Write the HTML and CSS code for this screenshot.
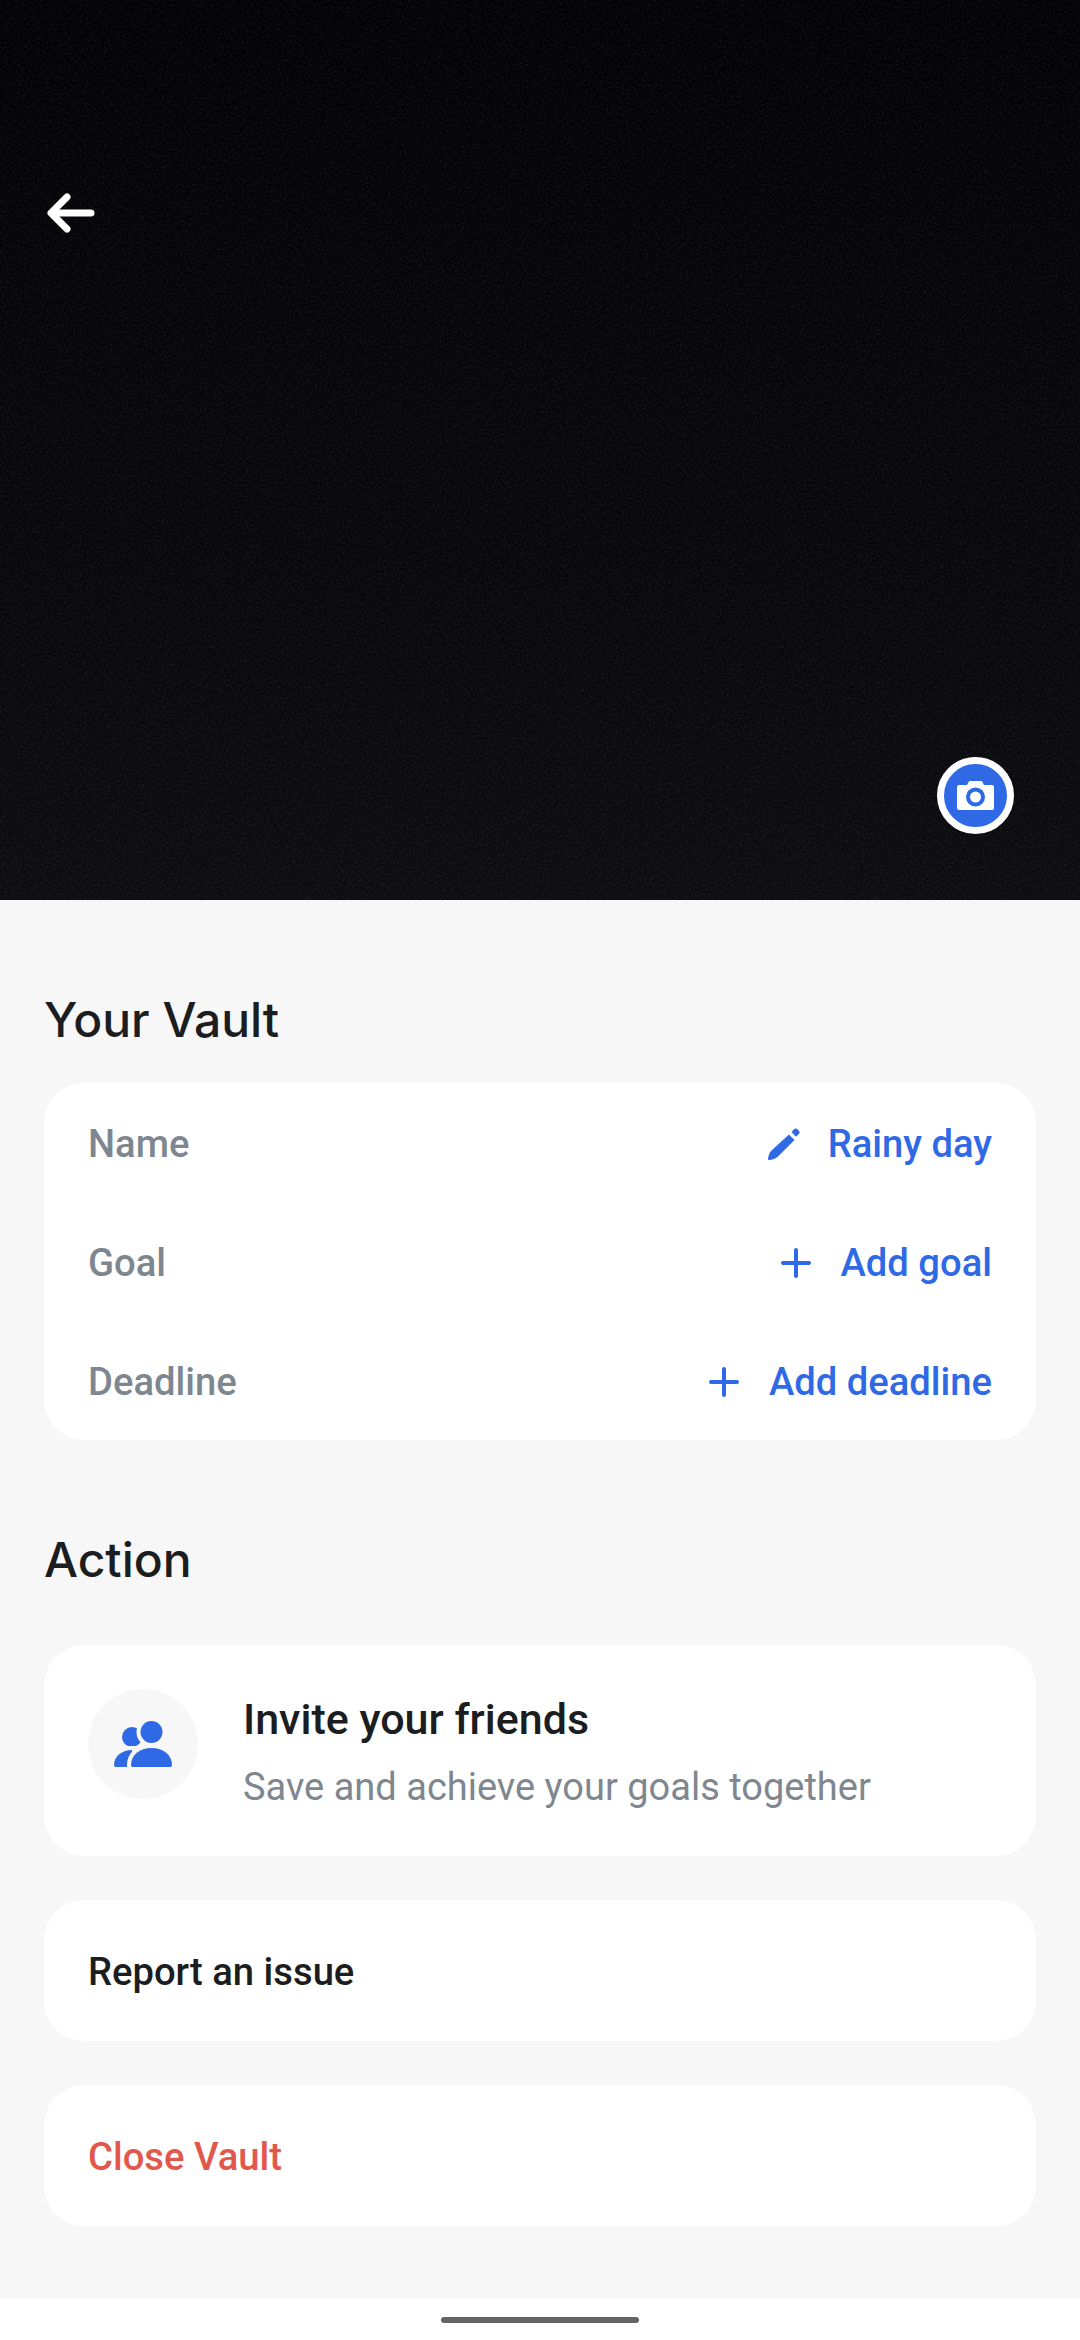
FILE: index.html
```html
<!DOCTYPE html>
<html lang="en">
<head>
  <meta charset="UTF-8" />
  <meta name="viewport" content="width=device-width, initial-scale=1.0"/>
  <title>Your Vault</title>
  <link rel="stylesheet" href="styles.css">
</head>
<body>

  <header class="hero">
    <svg class="grain" width="1080" height="900" aria-hidden="true">
      <filter id="grain">
        <feTurbulence type="fractalNoise" baseFrequency="0.45" numOctaves="2" seed="7"/>
        <feColorMatrix values="0 0 0 0 1  0 0 0 0 1  0 0 0 0 1  0.14 0 0 0 -0.055"/>
      </filter>
      <rect width="1080" height="900" filter="url(#grain)"/>
    </svg>
    <button class="back" aria-label="Back">
      <svg width="50" height="42" viewBox="0 0 50 42" fill="none" stroke="#fff" stroke-width="7" stroke-linecap="round" stroke-linejoin="round">
        <path d="M45 21H6M21 5L5 21l16 16"/>
      </svg>
    </button>
    <button class="camera" aria-label="Change picture">
      <svg width="37" height="29" viewBox="0 0 37 29">
        <path fill="#fff" d="M2 4h8l1.500-3c.3-.7.8-1 1.500-1h11c.7 0 1.200.3 1.500 1L27 4h8a2 2 0 0 1 2 2v21a2 2 0 0 1-2 2H2a2 2 0 0 1-2-2V6a2 2 0 0 1 2-2z"/>
        <circle cx="18.500" cy="16" r="9.500" fill="#2f69e5"/>
        <circle cx="18.500" cy="16" r="5.500" fill="#fff"/>
      </svg>
    </button>
  </header>

  <main>
    <h2 class="vault-title">Your Vault</h2>
    <section class="card details">
      <div class="row">
        <span class="label">Name</span>
        <a class="value">
          <svg class="edit-icon" width="32" height="32" viewBox="0 0 32 32" fill="#2f69e5">
            <path d="M21 6.500l5.500 5.500L10 28.500c-2.500 2.300-6 3.200-8.800 3.500-.8.100-1.300-.4-1.200-1.200.4-2.800 1.300-6.200 3.500-8.300z"/>
            <path d="M23.500 4l2.800-2.900c.9-.9 1.900-.9 2.700-.1l2.100 2.100c.8.800.8 1.900-.1 2.700L28 8.800z"/>
          </svg>
          Rainy day
        </a>
      </div>
      <div class="row">
        <span class="label">Goal</span>
        <a class="value">
          <svg width="30" height="30" viewBox="0 0 30 30" stroke="#2f69e5" stroke-width="4" stroke-linecap="round">
            <path d="M15 2v26M2 15h26"/>
          </svg>
          Add goal
        </a>
      </div>
      <div class="row">
        <span class="label">Deadline</span>
        <a class="value">
          <svg width="30" height="30" viewBox="0 0 30 30" stroke="#2f69e5" stroke-width="4" stroke-linecap="round">
            <path d="M15 2v26M2 15h26"/>
          </svg>
          Add deadline
        </a>
      </div>
    </section>

    <h2 class="action-title">Action</h2>
    <section class="card invite">
      <div class="invite-icon">
        <svg width="58" height="46" viewBox="0 0 58 46" fill="#2f69e5" stroke="#f7f7f7" stroke-width="8" paint-order="stroke">
          <circle cx="18" cy="16" r="10"/>
          <path d="M0 44c0-8 7-15 18-15v17H2c-1.300 0-2-.8-2-2z"/>
          <circle cx="37.500" cy="11" r="11"/>
          <path d="M19 46c-1.500 0-2-.8-2-2 0-10 8.500-17 20.500-17S58 34 58 44c0 1.200-.7 2-2 2z"/>
        </svg>
      </div>
      <div class="invite-text">
        <h3>Invite your friends</h3>
        <p>Save and achieve your goals together</p>
      </div>
    </section>

    <section class="card link">Report an issue</section>
    <section class="card link danger">Close Vault</section>
  </main>

  <footer>
    <div class="handle"></div>
  </footer>

</body>
</html>
```

FILE: styles.css
```css
* { box-sizing: border-box; font-family: 'Roboto', sans-serif; }
html, body { height: 100%; }
body {
  margin: 0;
  background: #fff;
  display: flex;
  flex-direction: column;
  overflow: hidden;
}
button {
  background: none;
  border: none;
  padding: 0;
  display: flex;
  position: relative;
}
.hero {
  position: relative;
  height: 900px;
  flex: none;
  display: flex;
  flex-direction: column;
  justify-content: space-between;
  align-items: flex-start;
  padding: 192px 66px 66px 46px;
  background: linear-gradient(#020205, #0b0b10);
}
.grain {
  position: absolute;
  top: 0;
  left: 0;
}
.camera {
  align-self: flex-end;
  width: 77px;
  height: 77px;
  border-radius: 50%;
  background: #2f69e5;
  border: 7px solid #fff;
  align-items: center;
  justify-content: center;
}
main {
  flex: 1;
  background: #f7f7f7;
  padding: 0 44px;
}
h2 {
  margin: 0;
  font-family: 'Inter', sans-serif;
  font-weight: 500;
  font-size: 48px;
  line-height: 60px;
  color: #1b1d21;
}
.vault-title { padding-top: 90px; margin-bottom: 33px; }
.action-title { margin-top: 90px; margin-bottom: 55px; }
.card {
  background: #fff;
  border-radius: 40px;
}
.row {
  height: 119px;
  display: flex;
  align-items: center;
  justify-content: space-between;
  padding: 3px 44px 0;
  font-size: 38.200px;
  font-weight: 500;
}
.label { color: #7e8790; }
.value {
  display: flex;
  align-items: center;
  gap: 30px;
  color: #2f69e5;
}
.edit-icon { margin-right: -2px; }
.invite {
  height: 211px;
  display: flex;
  align-items: flex-start;
  gap: 45px;
  padding: 44px 44px 0;
  margin-bottom: 44px;
}
.invite-icon {
  width: 110px;
  height: 110px;
  border-radius: 50%;
  background: #f7f7f7;
  display: flex;
  align-items: center;
  justify-content: center;
}
.invite-text { padding-top: 4px; }
.invite-text h3 {
  margin: 0 0 19px;
  font-size: 43px;
  font-weight: 500;
  line-height: 52px;
  color: #1b1d21;
}
.invite-text p {
  margin: 0;
  font-size: 38px;
  line-height: 46px;
  color: #7e8790;
}
.link {
  height: 141px;
  display: flex;
  align-items: center;
  padding: 3px 44px 0;
  margin-bottom: 44px;
  font-size: 38.200px;
  font-weight: 500;
  color: #1b1d21;
}
.danger { color: #e2574c; margin-bottom: 0; }
footer {
  flex: none;
  height: 41px;
  background: #fff;
  display: flex;
  justify-content: center;
  padding-top: 18px;
}
.handle {
  width: 198px;
  height: 6px;
  border-radius: 3px;
  background: #636363;
}
```
